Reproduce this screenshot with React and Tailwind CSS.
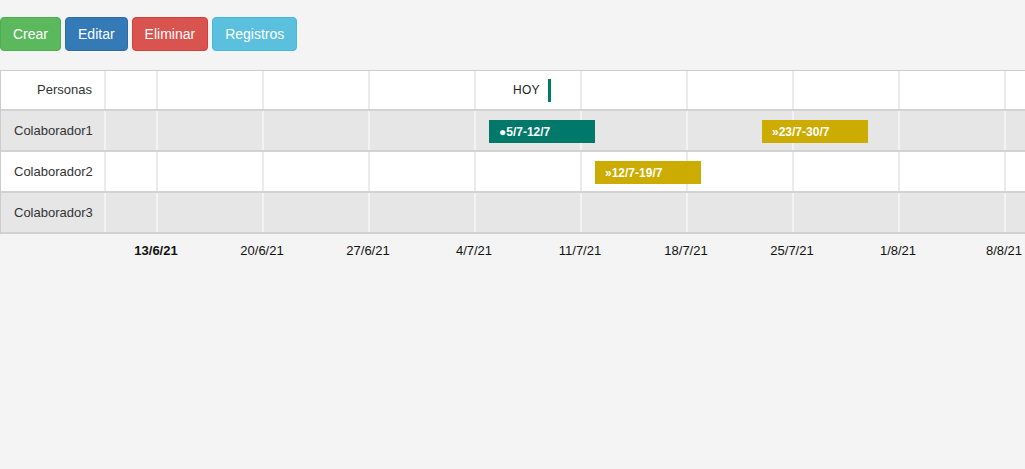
import React from "react";

const rows = [
  { name: "Colaborador1", bg: "bg-[#e6e6e6]", line: "border-[#f3f3f3]" },
  { name: "Colaborador2", bg: "bg-white", line: "border-[#ebebeb]" },
  { name: "Colaborador3", bg: "bg-[#e6e6e6]", line: "border-[#f3f3f3]" },
];

const dates = ["13/6/21", "20/6/21", "27/6/21", "4/7/21", "11/7/21", "18/7/21", "25/7/21", "1/8/21", "8/8/21"];

function Cells({ line }) {
  return (
    <div className="flex h-full">
      <div className={`w-[52px] shrink-0 h-full border-l-2 ${line}`} />
      {Array.from({ length: 9 }).map((_, i) => (
        <div key={i} className={`w-[106px] shrink-0 h-full border-l-2 ${line}`} />
      ))}
    </div>
  );
}

function Bar({ left, color, prefix, text }) {
  return (
    <div
      className={`absolute top-[9px] h-[23px] w-[106px] ${color} flex items-center pl-[10px] text-white font-bold text-[12px] leading-none`}
      style={{ left }}
    >
      <span className="text-[12px]">{prefix}</span>
      {text}
    </div>
  );
}

export default function App() {
  return (
    <div className="min-h-screen w-full overflow-hidden bg-[#f4f4f4] font-['Liberation_Sans',Arial,sans-serif]">
      <div className="pt-[17px] flex gap-[4px]">
        <button className="h-[34px] px-[12px] rounded-[4px] border border-[#4cae4c] bg-[#5cb85c] text-white text-[14px]">Crear</button>
        <button className="h-[34px] px-[12px] rounded-[4px] border border-[#2e6da4] bg-[#337ab7] text-white text-[14px]">Editar</button>
        <button className="h-[34px] px-[12px] rounded-[4px] border border-[#d43f3a] bg-[#d9534f] text-white text-[14px]">Eliminar</button>
        <button className="h-[34px] px-[12px] rounded-[4px] border border-[#46b8da] bg-[#5bc0de] text-white text-[14px]">Registros</button>
      </div>

      <div className="mt-[19px] w-[1200px] border-t border-l border-[#cccccc]">
        {/* header */}
        <div className="flex h-[40px] bg-white border-b-2 border-[#d2d2d2]">
          <div className="w-[103px] shrink-0 flex items-center justify-end pr-[12px] text-[13px] text-[#333]">Personas</div>
          <div className="relative flex-1 h-full">
            <Cells line="border-[#ebebeb]" />
            <div className="absolute left-[409px] top-0 h-full flex items-center">
              <span className="text-[12px] text-[#222] tracking-[0.3px]">HOY</span>
            </div>
            <div className="absolute left-[444px] top-[8px] w-[3px] h-[23px] bg-[#00796b]" />
          </div>
        </div>
        {rows.map((r, idx) => (
          <div key={r.name} className={`flex h-[41px] ${r.bg} border-b-2 border-[#d2d2d2]`}>
            <div className="w-[103px] shrink-0 flex items-center pl-[13px] text-[13px] text-[#333]">{r.name}</div>
            <div className="relative flex-1 h-full">
              <Cells line={r.line} />
              {idx === 0 && (
                <>
                  <Bar left={385} color="bg-[#00796b]" prefix="●" text="5/7-12/7" />
                  <Bar left={658} color="bg-[#ccac00]" prefix="»" text="23/7-30/7" />
                </>
              )}
              {idx === 1 && <Bar left={491} color="bg-[#ccac00]" prefix="»" text="12/7-19/7" />}
            </div>
          </div>
        ))}
      </div>

      <div className="flex pl-[103px] h-[34px] items-center">
        {dates.map((d, i) => (
          <div
            key={d}
            className={`w-[106px] shrink-0 text-center text-[13px] text-[#111] ${i === 0 ? "font-bold" : ""}`}
          >
            {d}
          </div>
        ))}
      </div>
    </div>
  );
}
